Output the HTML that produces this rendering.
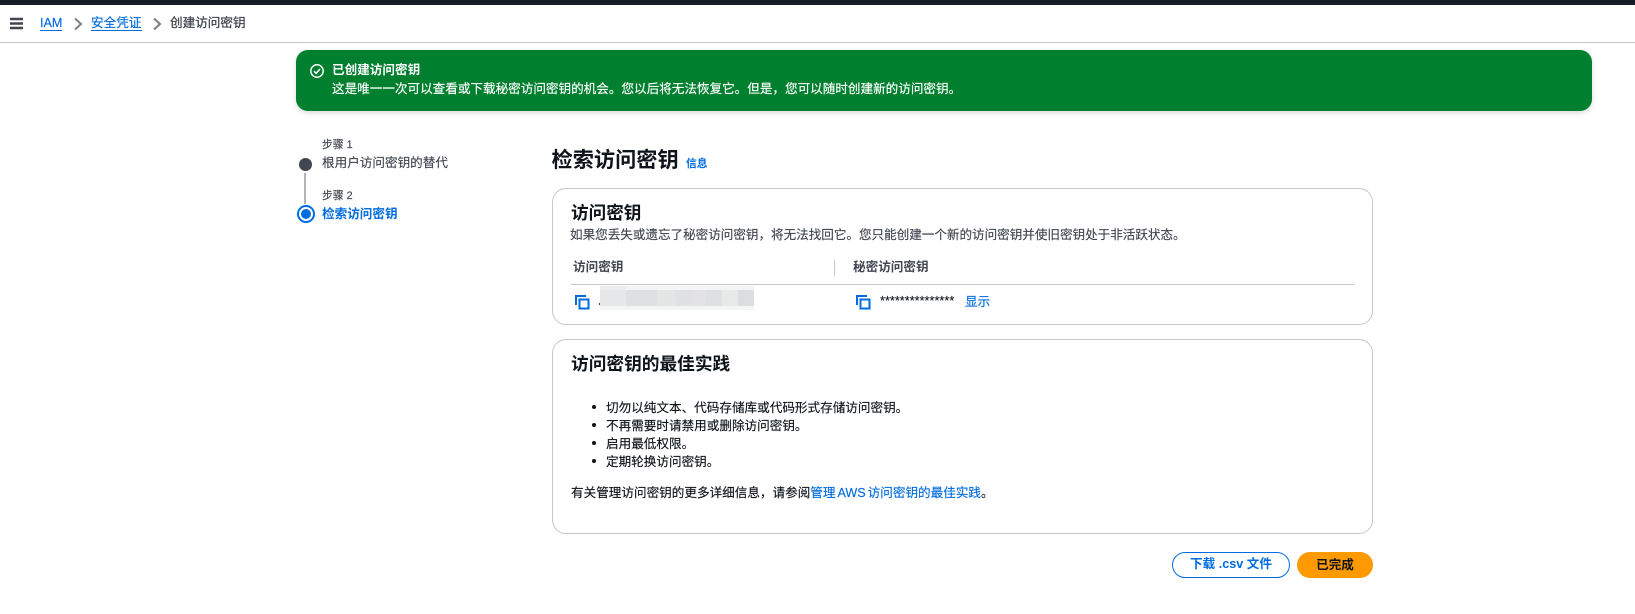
<!DOCTYPE html>
<html lang="zh-CN"><head><meta charset="utf-8"><title>创建访问密钥</title>
<style>
html,body{margin:0;padding:0;width:1635px;height:614px;overflow:hidden;background:#fff}
body{position:relative;font-family:"Liberation Sans","Noto Sans CJK SC",sans-serif;font-size:12.6px;color:#0f141a}
.t{position:absolute;white-space:nowrap;line-height:18px;height:18px;-webkit-text-stroke:.15px currentColor}
.b{font-weight:700;-webkit-text-stroke:0}
.l{color:#006ce0}
.g{color:#424650}
.box{position:absolute;box-sizing:border-box}
.card{position:absolute;box-sizing:border-box;left:552px;width:821px;border:1px solid #c6c6cd;border-radius:14px;background:#fff}
svg{position:absolute;overflow:visible}
</style></head><body>
<div class="box" style="left:0;top:0;width:1635px;height:5px;background:#161d26"></div>
<div class="box" style="left:0;top:42px;width:1635px;height:1px;background:#c6c6cd"></div>
<svg style="left:10px;top:18px" width="13" height="11" viewBox="0 0 13 11"><path d="M0 1h13M0 5.500h13M0 10h13" stroke="#424650" stroke-width="2.400" fill="none"/></svg>
<div class="t l" style="left:40px;top:14px">IAM</div>
<div class="box" style="left:40px;top:30px;width:22px;height:1px;background:#006ce0"></div>
<svg style="left:74px;top:18px" width="8" height="12" viewBox="0 0 8 12"><path d="M1 .500l6 5.500-6 5.500" stroke="#7a7d85" stroke-width="2" fill="none"/></svg>
<div class="t l" style="left:91px;top:14px">安全凭证</div>
<div class="box" style="left:91px;top:30px;width:51px;height:1px;background:#006ce0"></div>
<svg style="left:153px;top:18px" width="8" height="12" viewBox="0 0 8 12"><path d="M1 .500l6 5.500-6 5.500" stroke="#7a7d85" stroke-width="2" fill="none"/></svg>
<div class="t g" style="left:170px;top:14px;-webkit-text-stroke:.3px #424650">创建访问密钥</div>

<div class="box" style="left:296px;top:50px;width:1296px;height:61px;background:#00802f;border-radius:12px;box-shadow:0 2px 6px rgba(0,7,22,.15)"></div>
<svg style="left:310px;top:64px" width="14" height="14" viewBox="0 0 14 14"><circle cx="7" cy="7" r="6.200" stroke="#fff" stroke-width="1.500" fill="none"/><path d="M4 7.200l2.200 2.200L10 5" stroke="#fff" stroke-width="1.500" fill="none"/></svg>
<div class="t b" style="left:332px;top:61px;color:#fff">已创建访问密钥</div>
<div class="t" style="left:332px;top:80px;color:#fff;letter-spacing:-.01px">这是唯一一次可以查看或下载秘密访问密钥的机会。您以后将无法恢复它。但是，您可以随时创建新的访问密钥。</div>

<div class="t g" style="left:322px;top:136px;font-size:10.800px">步骤 1</div>
<div class="t g" style="left:322px;top:154px">根用户访问密钥的替代</div>
<div class="box" style="left:299px;top:158px;width:13px;height:13px;border-radius:50%;background:#424650"></div>
<div class="box" style="left:304px;top:173px;width:2px;height:31px;background:#b4b4bb"></div>
<div class="t g" style="left:322px;top:187px;font-size:10.800px">步骤 2</div>
<div class="t l b" style="left:322px;top:205px">检索访问密钥</div>
<div class="box" style="left:297px;top:205px;width:18px;height:18px;border-radius:50%;border:2px solid #006ce0;background:#fff"></div>
<div class="box" style="left:301px;top:209px;width:10px;height:10px;border-radius:50%;background:#006ce0"></div>

<div class="t b" style="left:551.500px;top:145px;font-size:21.200px;line-height:32px;height:32px">检索访问密钥</div>
<div class="t l b" style="left:686px;top:155px;font-size:10.800px">信息</div>

<div class="card" style="top:188px;height:137px"></div>
<div class="t b" style="left:571px;top:200px;font-size:17.600px;line-height:26px;height:26px">访问密钥</div>
<div class="t g" style="left:570px;top:226px;letter-spacing:-.03px">如果您丢失或遗忘了秘密访问密钥，将无法找回它。您只能创建一个新的访问密钥并使旧密钥处于非活跃状态。</div>
<div class="t g b" style="left:573px;top:258px">访问密钥</div>
<div class="box" style="left:834px;top:260px;width:1px;height:16px;background:#c6c6cd"></div>
<div class="t g b" style="left:853px;top:258px">秘密访问密钥</div>
<div class="box" style="left:571px;top:284px;width:783px;height:1px;background:#c6c6cd"></div>
<svg style="left:575px;top:295px" width="15" height="15" viewBox="0 0 15 15"><path d="M1 10V1h10" stroke="#006ce0" stroke-width="2" fill="none"/><rect x="4.500" y="4.500" width="9" height="9" stroke="#006ce0" stroke-width="2" fill="none"/></svg>
<div class="box" style="left:599px;top:303px;width:2px;height:2px;background:#5a4030"></div>
<div class="box" style="left:600px;top:286px;width:154px;height:24px;background:#f3f4f4"></div>
<div class="box" style="left:600px;top:286px;width:26px;height:4px;background:#ececec"></div>
<div class="box" style="left:600px;top:290px;width:26px;height:16px;background:#e6e7e8"></div>
<div class="box" style="left:626px;top:290px;width:31px;height:16px;background:#dfe0e2"></div>
<div class="box" style="left:657px;top:290px;width:18px;height:16px;background:#e4e6e6"></div>
<div class="box" style="left:675px;top:290px;width:17px;height:16px;background:#e0e1e2"></div>
<div class="box" style="left:692px;top:290px;width:13px;height:16px;background:#e3e3e5"></div>
<div class="box" style="left:705px;top:290px;width:17px;height:16px;background:#dfe0e2"></div>
<div class="box" style="left:722px;top:290px;width:16px;height:16px;background:#e7e8e8"></div>
<div class="box" style="left:738px;top:290px;width:16px;height:16px;background:#dcddde"></div>
<svg style="left:856px;top:295px" width="15" height="15" viewBox="0 0 15 15"><path d="M1 10V1h10" stroke="#006ce0" stroke-width="2" fill="none"/><rect x="4.500" y="4.500" width="9" height="9" stroke="#006ce0" stroke-width="2" fill="none"/></svg>
<div class="t" style="left:880px;top:292px;letter-spacing:.05px">***************</div>
<div class="t l" style="left:965px;top:293px">显示</div>

<div class="card" style="top:339px;height:195px"></div>
<div class="t b" style="left:571px;top:351px;font-size:17.700px;line-height:26px;height:26px">访问密钥的最佳实践</div>
<div class="box" style="left:592px;top:405px;width:4px;height:4px;border-radius:50%;background:#0f141a"></div>
<div class="t" style="left:606px;top:399px">切勿以纯文本、代码存储库或代码形式存储访问密钥。</div>
<div class="box" style="left:592px;top:423px;width:4px;height:4px;border-radius:50%;background:#0f141a"></div>
<div class="t" style="left:606px;top:417px">不再需要时请禁用或删除访问密钥。</div>
<div class="box" style="left:592px;top:441px;width:4px;height:4px;border-radius:50%;background:#0f141a"></div>
<div class="t" style="left:606px;top:435px">启用最低权限。</div>
<div class="box" style="left:592px;top:459px;width:4px;height:4px;border-radius:50%;background:#0f141a"></div>
<div class="t" style="left:606px;top:453px">定期轮换访问密钥。</div>
<div class="t" style="left:571px;top:484px">有关管理访问密钥的更多详细信息，请参阅<span class="l" style="word-spacing:-1.500px">管理 AWS 访问密钥的最佳实践</span>。</div>

<div class="box l b" style="left:1172px;top:552px;width:118px;height:26px;border:1.500px solid #006ce0;border-radius:13px;text-align:center;line-height:23px;background:#fff">下载 .csv 文件</div>
<div class="box b" style="left:1297px;top:552px;width:76px;height:26px;border-radius:13px;text-align:center;line-height:26px;background:#ff9900">已完成</div>
</body></html>
